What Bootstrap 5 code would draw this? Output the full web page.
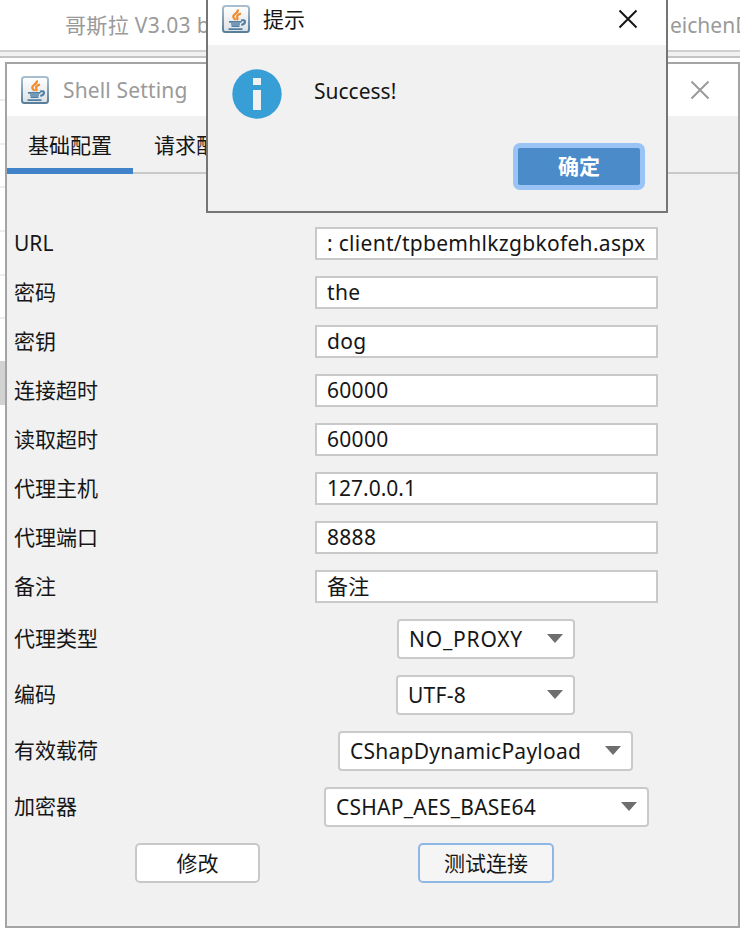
<!DOCTYPE html>
<html lang="zh-CN">
<head>
<meta charset="utf-8">
<meta name="viewport" content="width=device-width, initial-scale=1">
<title>Shell Setting</title>
<link href="https://cdn.jsdelivr.net/npm/bootstrap@5.3.0/dist/css/bootstrap.min.css" rel="stylesheet">
<style>
html,body{height:929px;overflow:hidden}
body{font:21px/28px "Noto Sans","Noto Sans CJK SC",sans-serif;color:#161616;background:#fff;position:relative}
svg{display:block;flex:none}
.desk-title{height:50px;padding:0 0 0 65px;color:#9a9a9a;overflow:hidden}
.desk-title .head{width:200px;flex:none;letter-spacing:.35px}
.desk-title .tail{margin-left:405px;flex:none}
.desk-rule{height:8px;background:#f1f1f1;border-top:2px solid #cfcfcf;border-bottom:2px solid #c4c4c4}
.desk-rows{width:5px;margin-top:41px}
.desk-rows i{display:block;height:43.7px;border-top:2px solid #ededed}
.desk-rows .picked{background:#d2d2d2;border-color:#d2d2d2}
.shell-win{left:5px;top:62px;width:735px;height:866px;border:2px solid #a4a4a4;background:#f1f1f1}
.win-bar{height:52px;color:#9a9a9a;padding:0 28px 0 14px}
.win-bar .name{margin-left:14px;letter-spacing:.15px}
.tab-strip{height:58px;border-bottom:2px solid #c9c9c9}
.tab-item{height:58px;width:126px;padding-top:15px;text-align:center}
.tab-item.on{border-bottom:6px solid #4083c9}
.form-area{padding:45px 0 0 7px}
.line{height:49px}
.line.tall{height:56px}
.line .caption{width:301px;padding-bottom:2px}
.line .slot{width:343px}
.entry{height:33px;border:2px solid #c9c9c9;background:#fff;padding:0 0 0 10px;overflow:hidden}
.entry span{display:block;height:27px;padding-top:1px;line-height:26px;overflow:hidden;white-space:pre;letter-spacing:.3px}
.entry .addr{letter-spacing:0}
.combo{height:40px;border:2px solid #cacaca;border-radius:4px;background:#fff;padding:0 10px 1px;letter-spacing:.25px;margin-right:2px}
.combo span{white-space:pre}
.combo.w-no{letter-spacing:.8px;margin-right:1px}
.push{height:40px;border:2px solid #c8c8c8;border-radius:5px;background:#fff;color:#161616;padding:0;font-size:21px;line-height:34px}
.push.hot{border-color:#8fb7e4;background:#f5f5f5}
.w-no{width:178px}.w-utf{width:179px}.w-pay{width:295px}.w-enc{width:325px}
.combo.w-enc{margin-right:0}
.w-edit{width:125px;margin-left:121px}.w-test{width:136px;margin-left:158px}
.msg-win{left:206px;top:-8px;width:462px;height:221px;border:2px solid #757575;background:#f1f1f1}
.msg-bar{height:51px;padding:5px 28px 6px 14px;background:#fff}
.msg-bar .name{margin:0 auto 0 13px}
.msg-body{padding:24px 0 0 24px}
.push.ok{width:132px;height:47px;margin:24px 21px 0 0;border:5px solid #99c4f5;border-radius:7px;background:#4c8bca;color:#fff;font-weight:700;line-height:37px}
</style>
<script src="https://cdn.jsdelivr.net/npm/bootstrap@5.3.0/dist/js/bootstrap.bundle.min.js"></script>
</head>
<body>
<svg width="0" height="0" class="position-absolute">
  <defs>
    <linearGradient id="face" x2="0" y2="1"><stop stop-color="#fff"/><stop offset="1" stop-color="#dce1e5"/></linearGradient>
    <linearGradient id="rim" x2="0" y2="1"><stop stop-color="#a9bfd0"/><stop offset="1" stop-color="#587e9a"/></linearGradient>
    <symbol id="java" viewBox="0 0 28 28">
      <rect x="1" y="1" width="26" height="26" rx="2.5" fill="url(#face)" stroke="url(#rim)" stroke-width="2"/>
      <path d="M15.800 4.500C17 8 10.500 9 11.300 12c.3 1.200 1.700 2 2.200 3M19 8.500c-2.500.8-4.500 2-3.800 3.600.5 1 .7 1.800-.3 2.900" fill="none" stroke="#f08a2c" stroke-width="2.200"/>
      <path d="M7 16.800h12.500M9 19h9M9.500 21.200h8M6.500 24.200h14" fill="none" stroke="#4f7fa5" stroke-width="1.700"/>
      <path d="M19 15.500c5-1.500 5.500 3 .3 4.500" fill="none" stroke="#4f7fa5" stroke-width="2.100"/>
    </symbol>
    <symbol id="cross" viewBox="0 0 20 20"><path d="M1.500 1.500l17 17M18.500 1.500l-17 17" stroke="currentColor" stroke-width="2" fill="none"/></symbol>
    <symbol id="tri" viewBox="0 0 16 9"><path d="M0 0h16L8 9z" fill="#6e6e6e"/></symbol>
  </defs>
</svg>

<div class="desk-title d-flex align-items-center text-nowrap"><span class="head">哥斯拉 V3.03 b</span><span class="tail">eichenD</span></div>
<div class="desk-rule"></div>
<div class="desk-rows"><i></i><i></i><i></i><i></i><i></i><i></i><i class="picked"></i></div>

<main class="shell-win position-absolute">
  <div class="win-bar bg-white d-flex align-items-center">
    <svg width="28" height="28"><use href="#java"/></svg>
    <span class="name me-auto">Shell Setting</span>
    <svg width="20" height="20"><use href="#cross"/></svg>
  </div>
  <div class="tab-strip d-flex">
    <div class="tab-item on">基础配置</div><div class="tab-item">请求配置</div>
  </div>
  <div class="form-area">
    <div class="line d-flex align-items-center"><span class="caption">URL</span><div class="slot entry"><span>: client/tpbemhlkzgbkofeh.aspx</span></div></div>
    <div class="line d-flex align-items-center"><span class="caption">密码</span><div class="slot entry"><span>the</span></div></div>
    <div class="line d-flex align-items-center"><span class="caption">密钥</span><div class="slot entry"><span>dog</span></div></div>
    <div class="line d-flex align-items-center"><span class="caption">连接超时</span><div class="slot entry"><span>60000</span></div></div>
    <div class="line d-flex align-items-center"><span class="caption">读取超时</span><div class="slot entry"><span>60000</span></div></div>
    <div class="line d-flex align-items-center"><span class="caption">代理主机</span><div class="slot entry"><span class="addr">127.0.0.1</span></div></div>
    <div class="line d-flex align-items-center"><span class="caption">代理端口</span><div class="slot entry"><span>8888</span></div></div>
    <div class="line d-flex align-items-center"><span class="caption">备注</span><div class="slot entry"><span>备注</span></div></div>
    <div class="line tall d-flex align-items-center"><span class="caption">代理类型</span><div class="slot d-flex justify-content-center"><div class="combo w-no d-flex align-items-center justify-content-between"><span>NO_PROXY</span><svg width="16" height="9"><use href="#tri"/></svg></div></div></div>
    <div class="line tall d-flex align-items-center"><span class="caption">编码</span><div class="slot d-flex justify-content-center"><div class="combo w-utf d-flex align-items-center justify-content-between"><span>UTF-8</span><svg width="16" height="9"><use href="#tri"/></svg></div></div></div>
    <div class="line tall d-flex align-items-center"><span class="caption">有效载荷</span><div class="slot d-flex justify-content-center"><div class="combo w-pay d-flex align-items-center justify-content-between"><span>CShapDynamicPayload</span><svg width="16" height="9"><use href="#tri"/></svg></div></div></div>
    <div class="line tall d-flex align-items-center"><span class="caption">加密器</span><div class="slot d-flex justify-content-center"><div class="combo w-enc d-flex align-items-center justify-content-between"><span>CSHAP_AES_BASE64</span><svg width="16" height="9"><use href="#tri"/></svg></div></div></div>
    <div class="line tall d-flex align-items-center"><button class="btn push w-edit">修改</button><button class="btn push hot w-test">测试连接</button></div>
  </div>
</main>

<section class="msg-win position-absolute">
  <div class="msg-bar d-flex align-items-center">
    <svg width="28" height="28"><use href="#java"/></svg>
    <span class="name">提示</span>
    <svg width="20" height="20"><use href="#cross"/></svg>
  </div>
  <div class="msg-body d-flex">
    <svg width="50" height="50" viewBox="0 0 50 50"><circle cx="25" cy="25" r="24.700" fill="#389fd6"/><path d="M21 9h8v7h-8zM21 21h8v20h-8z" fill="#f1f1f1"/></svg>
    <span class="ms-4 mt-2 ps-2">Success!</span>
  </div>
  <div class="d-flex justify-content-end"><button class="btn push ok">确定</button></div>
</section>
</body>
</html>
